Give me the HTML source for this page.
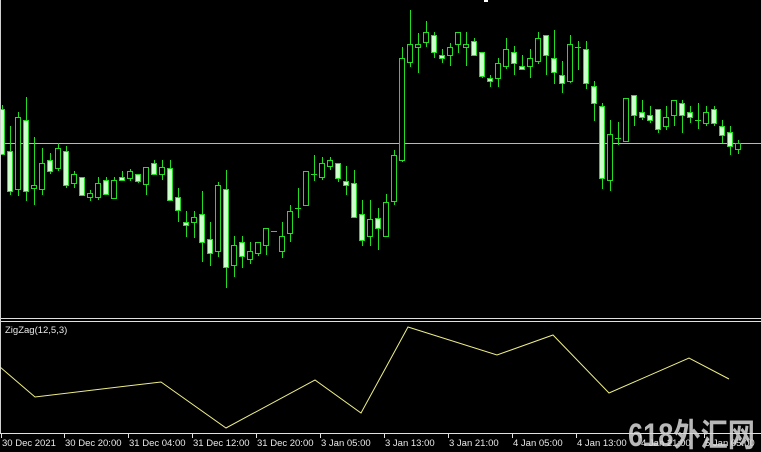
<!DOCTYPE html>
<html><head><meta charset="utf-8"><style>
html,body{margin:0;padding:0;background:#000;width:761px;height:452px;overflow:hidden}
svg{display:block}
</style></head><body>
<svg width="761" height="452" viewBox="0 0 761 452" xmlns="http://www.w3.org/2000/svg">
<rect width="761" height="452" fill="#000"/>
<line x1="0" y1="143.5" x2="761" y2="143.5" stroke="#b8b8b8" stroke-width="1"/>
<path stroke="#22dd22" stroke-width="1" fill="none" d="M2.5 105V154M10.5 126V195M18.5 112V196M26.5 97V201M34.5 137V205M42.5 148V195M50.5 153V174M58.5 143V171M66.5 146V188M74.5 171V188M82.5 177V195M90.5 190V201M98.5 177V200M106.5 177V194M114.5 177V198M122.5 171V180M130.5 169V181M138.5 174V183M146.5 167V195M154.5 160V174M162.5 160V180M170.5 160V200M178.5 188V222M186.5 211V237M194.5 211V238M202.5 191V262M210.5 222V266M218.5 182V257M226.5 170V288M234.5 236V277M242.5 236V268M250.5 242V264M258.5 242V256M266.5 228V255M282.5 222V258M290.5 205V242M298.5 188V218M306.5 171V206M314.5 155V181M322.5 157V180M330.5 157V170M338.5 163V182M346.5 166V195M354.5 170V218M362.5 200V246M370.5 200V246M378.5 208V250M386.5 194V237M394.5 150V205M402.5 47V162M410.5 10V67M418.5 33V73M426.5 21V47M434.5 32V58M442.5 49V63M450.5 43V66M458.5 32V53M466.5 32V66M474.5 38V55M482.5 52V78M490.5 75V87M498.5 58V87M506.5 38V69M514.5 46V75M522.5 55V70M530.5 49V78M538.5 32V64M546.5 35V75M554.5 30V84M562.5 61V93M570.5 35V83M578.5 41V70M586.5 41V89M594.5 81V121M602.5 103V189M610.5 120V191M618.5 122V145M626.5 98V141M634.5 95V126M642.5 100V120M650.5 106V123M658.5 109V133M666.5 106V130M674.5 100V126M682.5 100V133M690.5 106V123M698.5 103V129M706.5 106V126M714.5 106V126M722.5 120V143M730.5 126V155M738.5 140V154M271 231.5H277M295 208.5H301M311 174.5H317M575 47.5H581M615 138.5H621M695 120.5H701"/>
<g fill="#000" stroke="#22dd22" stroke-width="1">
<rect x="15.5" y="117.5" width="5" height="72"/>
<rect x="31.5" y="185.5" width="5" height="3"/>
<rect x="39.5" y="163.5" width="5" height="26"/>
<rect x="55.5" y="148.5" width="5" height="20"/>
<rect x="71.5" y="174.5" width="5" height="9"/>
<rect x="87.5" y="193.5" width="5" height="4"/>
<rect x="95.5" y="183.5" width="5" height="14"/>
<rect x="111.5" y="180.5" width="5" height="18"/>
<rect x="127.5" y="171.5" width="5" height="7"/>
<rect x="143.5" y="167.5" width="5" height="17"/>
<rect x="159.5" y="167.5" width="5" height="7"/>
<rect x="191.5" y="217.5" width="5" height="5"/>
<rect x="215.5" y="185.5" width="5" height="66"/>
<rect x="231.5" y="245.5" width="5" height="20"/>
<rect x="247.5" y="251.5" width="5" height="8"/>
<rect x="255.5" y="242.5" width="5" height="11"/>
<rect x="263.5" y="228.5" width="5" height="17"/>
<rect x="279.5" y="236.5" width="5" height="15"/>
<rect x="287.5" y="211.5" width="5" height="22"/>
<rect x="303.5" y="171.5" width="5" height="34"/>
<rect x="319.5" y="163.5" width="5" height="14"/>
<rect x="327.5" y="160.5" width="5" height="6"/>
<rect x="367.5" y="219.5" width="5" height="17"/>
<rect x="383.5" y="202.5" width="5" height="34"/>
<rect x="391.5" y="155.5" width="5" height="46"/>
<rect x="399.5" y="58.5" width="5" height="102"/>
<rect x="407.5" y="44.5" width="5" height="18"/>
<rect x="415.5" y="44.5" width="5" height="3"/>
<rect x="423.5" y="32.5" width="5" height="10"/>
<rect x="447.5" y="47.5" width="5" height="8"/>
<rect x="455.5" y="32.5" width="5" height="12"/>
<rect x="463.5" y="44.5" width="5" height="3"/>
<rect x="495.5" y="63.5" width="5" height="15"/>
<rect x="503.5" y="49.5" width="5" height="17"/>
<rect x="527.5" y="58.5" width="5" height="8"/>
<rect x="535.5" y="38.5" width="5" height="23"/>
<rect x="567.5" y="44.5" width="5" height="37"/>
<rect x="607.5" y="134.5" width="5" height="46"/>
<rect x="623.5" y="98.5" width="5" height="43"/>
<rect x="663.5" y="117.5" width="5" height="9"/>
<rect x="671.5" y="100.5" width="5" height="15"/>
<rect x="703.5" y="112.5" width="5" height="11"/>
<rect x="735.5" y="143.5" width="5" height="6"/>
</g>
<g fill="#ccffcc" stroke="#22dd22" stroke-width="1">
<rect x="-0.5" y="109.5" width="5" height="45"/>
<rect x="7.5" y="151.5" width="5" height="40"/>
<rect x="23.5" y="120.5" width="5" height="71"/>
<rect x="47.5" y="160.5" width="5" height="11"/>
<rect x="63.5" y="151.5" width="5" height="34"/>
<rect x="79.5" y="177.5" width="5" height="18"/>
<rect x="103.5" y="180.5" width="5" height="14"/>
<rect x="119.5" y="177.5" width="5" height="3"/>
<rect x="135.5" y="174.5" width="5" height="7"/>
<rect x="151.5" y="163.5" width="5" height="11"/>
<rect x="167.5" y="168.5" width="5" height="32"/>
<rect x="175.5" y="197.5" width="5" height="13"/>
<rect x="183.5" y="222.5" width="5" height="3"/>
<rect x="199.5" y="214.5" width="5" height="28"/>
<rect x="207.5" y="239.5" width="5" height="14"/>
<rect x="223.5" y="189.5" width="5" height="78"/>
<rect x="239.5" y="242.5" width="5" height="14"/>
<rect x="335.5" y="163.5" width="5" height="15"/>
<rect x="343.5" y="181.5" width="5" height="4"/>
<rect x="351.5" y="183.5" width="5" height="34"/>
<rect x="359.5" y="214.5" width="5" height="26"/>
<rect x="375.5" y="218.5" width="5" height="10"/>
<rect x="431.5" y="35.5" width="5" height="17"/>
<rect x="439.5" y="55.5" width="5" height="3"/>
<rect x="471.5" y="41.5" width="5" height="14"/>
<rect x="479.5" y="52.5" width="5" height="24"/>
<rect x="487.5" y="78.5" width="5" height="3"/>
<rect x="511.5" y="52.5" width="5" height="11"/>
<rect x="519.5" y="66.5" width="5" height="3"/>
<rect x="543.5" y="35.5" width="5" height="20"/>
<rect x="551.5" y="58.5" width="5" height="14"/>
<rect x="559.5" y="75.5" width="5" height="8"/>
<rect x="583.5" y="49.5" width="5" height="34"/>
<rect x="591.5" y="86.5" width="5" height="17"/>
<rect x="599.5" y="106.5" width="5" height="72"/>
<rect x="631.5" y="95.5" width="5" height="20"/>
<rect x="639.5" y="112.5" width="5" height="5"/>
<rect x="647.5" y="115.5" width="5" height="5"/>
<rect x="655.5" y="109.5" width="5" height="20"/>
<rect x="679.5" y="103.5" width="5" height="12"/>
<rect x="687.5" y="112.5" width="5" height="5"/>
<rect x="711.5" y="109.5" width="5" height="14"/>
<rect x="719.5" y="126.5" width="5" height="9"/>
<rect x="727.5" y="132.5" width="5" height="14"/>
</g>
<rect x="484" y="0" width="4" height="2" fill="#fff"/>
<line x1="0" y1="318.5" x2="761" y2="318.5" stroke="#e0e0e0"/>
<line x1="0" y1="321.5" x2="761" y2="321.5" stroke="#e0e0e0"/>
<line x1="0.5" y1="0" x2="0.5" y2="434" stroke="#d0d0d0"/>
<line x1="0" y1="433.5" x2="761" y2="433.5" stroke="#e0e0e0"/>
<text x="5" y="333" font-family="Liberation Sans, sans-serif" font-size="9.5" fill="#e8e8e8">ZigZag(12,5,3)</text>
<polyline fill="none" stroke="#eeee88" stroke-width="1" points="0,367 35,397 161,382 226,428 315,380 361,413 408,327 497,355 553,335 609,393 689,358 729,379"/>
<path stroke="#e0e0e0" d="M1.5 433V438M64.5 433V438M128.5 433V438M192.5 433V438M256.5 433V438M320.5 433V438M384.5 433V438M448.5 433V438M512.5 433V438M576.5 433V438M640.5 433V438M704.5 433V438"/>
<g font-family="Liberation Sans, sans-serif" font-size="9.5" fill="#e8e8e8">
<text x="2" y="446">30 Dec 2021</text>
<text x="65" y="446">30 Dec 20:00</text>
<text x="129" y="446">31 Dec 04:00</text>
<text x="193" y="446">31 Dec 12:00</text>
<text x="257" y="446">31 Dec 20:00</text>
<text x="321" y="446">3 Jan 05:00</text>
<text x="385" y="446">3 Jan 13:00</text>
<text x="449" y="446">3 Jan 21:00</text>
<text x="513" y="446">4 Jan 05:00</text>
<text x="577" y="446">4 Jan 13:00</text>
<text x="641" y="446">4 Jan 21:00</text>
<text x="705" y="446">5 Jan 05:00</text>
</g>
<text x="628" y="446" textLength="127" lengthAdjust="spacingAndGlyphs" font-family="Liberation Sans, 'Noto Sans CJK SC', sans-serif" font-size="32" font-weight="bold" fill="#d8d8d8" fill-opacity="0.85">618外汇网</text>
</svg>
</body></html>
